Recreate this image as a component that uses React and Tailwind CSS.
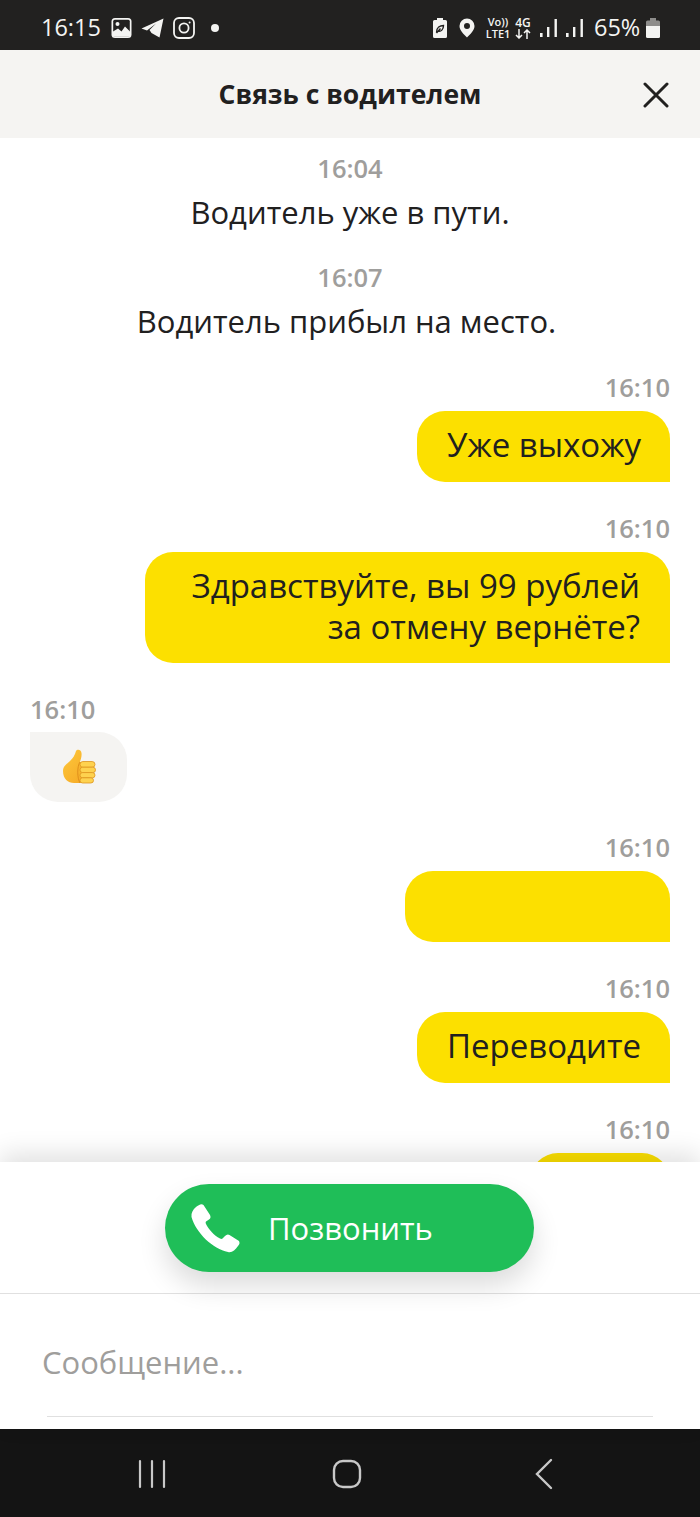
import React from "react";

const SANS = "font-['Open_Sans','Noto_Sans',sans-serif]";

/* -----------------------status bar icons---------------------------- */
const PhotoIcon = () => (
  <svg width="22" height="22" viewBox="0 0 22 22">
    <rect x="0.5" y="1" width="20" height="20" rx="3.5" fill="#f4f4f2" />
    <rect x="2.2" y="2.8" width="16.6" height="16.4" rx="1.5" fill="#222120" />
    <path d="M2 19.5V14.5L7 11.5L10.5 14.5L14 9.5L19 14.5V19.5Z" fill="#f4f4f2" />
    <circle cx="6.5" cy="7" r="2" fill="#f4f4f2" />
  </svg>
);

const TelegramIcon = () => (
  <svg width="24" height="22" viewBox="0 0 24 22">
    <path d="M0.5 11.5L22.5 1.5L18.5 20.5L10.5 16L8.5 13L15 6.5L6 13.5Z" fill="#f4f4f2" />
  </svg>
);

const InstagramIcon = () => (
  <svg width="22" height="22" viewBox="0 0 22 22" fill="none" stroke="#f4f4f2" strokeWidth="1.8">
    <rect x="1" y="1" width="20" height="20" rx="5" />
    <circle cx="11" cy="11" r="4.6" />
    <circle cx="16.6" cy="5.4" r="1" fill="#f4f4f2" stroke="none" />
  </svg>
);

const EcoBatteryIcon = () => (
  <svg width="16" height="22" viewBox="0 0 16 22">
    <path d="M5 1H11V3H13.5Q15 3 15 4.5V19.5Q15 21 13.5 21H2.5Q1 21 1 19.5V4.5Q1 3 2.5 3H5Z" fill="#f4f4f2" />
    <path d="M4.5 15.5C4.5 10.5 8 8.5 11.5 8.5C11.5 12.5 9 15 6 14M4.5 16L8.5 11.5" fill="none" stroke="#222120" strokeWidth="1.4" />
  </svg>
);

const PinIcon = () => (
  <svg width="16" height="20" viewBox="0 0 16 20">
    <path fillRule="evenodd" d="M8 0.5A7.5 7.5 0 0 1 15.5 8C15.5 12.5 11 16.5 8 19.5C5 16.5 0.5 12.5 0.5 8A7.5 7.5 0 0 1 8 0.5ZM8 5A3 3 0 1 0 8 11A3 3 0 0 0 8 5Z" fill="#f4f4f2" />
  </svg>
);

const ArrowsIcon = () => (
  <svg width="16" height="10" viewBox="0 0 16 10" fill="none" stroke="#f4f4f2" strokeWidth="1.5">
    <path d="M4 0V9M1 6L4 9L7 6M12 10V1M9 4L12 1L15 4" />
  </svg>
);

const SignalIcon = () => (
  <svg width="18" height="20" viewBox="0 0 18 20" fill="#f4f4f2">
    <rect x="0" y="15" width="2.6" height="4" />
    <rect x="7" y="9" width="2.4" height="10" />
    <rect x="14.5" y="1" width="2.4" height="18" />
  </svg>
);

const BatteryIcon = () => (
  <svg width="16" height="22" viewBox="0 0 16 22">
    <path d="M5 1H11V3.5H13.5Q15 3.5 15 5V9H1V5Q1 3.5 2.5 3.500H5Z" fill="#8e8d8b" />
    <path d="M1 9H15V19.5Q15 21 13.5 21H2.5Q1 21 1 19.5Z" fill="#f4f4f2" />
  </svg>
);

/* -----------------------thumb emoji---------------------------- */
const ThumbIcon = () => (
  <svg width="34" height="36" viewBox="0 0 34 36">
    <defs>
      <linearGradient id="thumbFill" x1="0" y1="0" x2="1" y2="1">
        <stop offset="0" stopColor="#fdc83c" />
        <stop offset="1" stopColor="#f5a623" />
      </linearGradient>
    </defs>
    <path d="M1 22C1 17 5 15 8 12C11 9 13 6 14 2C15 0 19 0 19.500 4C20 8 18.500 11 18 13H26C28 13 29 34 26 34H12C6 34 1 30 1 22Z" fill="url(#thumbFill)" />
    <path d="M18 13C15 17 15 29 18 34" fill="none" stroke="#e08f1a" strokeWidth="1" />
    <rect x="18" y="12.500" width="15" height="5.800" rx="2.900" fill="#fed24f" stroke="#dd9420" strokeWidth="0.800" />
    <rect x="18" y="18.200" width="15.500" height="5.400" rx="2.700" fill="#fed24f" stroke="#dd9420" strokeWidth="0.800" />
    <rect x="18" y="23.600" width="15" height="5.200" rx="2.600" fill="#fed24f" stroke="#dd9420" strokeWidth="0.800" />
    <rect x="18" y="28.800" width="13.500" height="5.200" rx="2.600" fill="#fed24f" stroke="#dd9420" strokeWidth="0.800" />
  </svg>
);

const PhoneIcon = () => (
  <svg width="50" height="50" viewBox="0 0 50 50">
    <path d="M6 4C8.500 2 11.500 0 13.500 2L20 12C21 14 20.500 15.500 19 16.500L16 18.500C15.500 19 15.500 20 16 21C18.500 26 24 32.500 30 35.500C31 36 32 36 32.500 35.500L35 33C36.500 31.500 38 31 39.500 32L49 38C50 40 49.500 41.500 48 43C45 47 42 50 38 49C23 46 6 30 1.500 14C1 10 3 6.500 6 4Z" fill="#fff" />
  </svg>
);

/* -----------------------chat pieces---------------------------- */
const Time = ({ children, align = "text-right" }) => (
  <div className={`h-[30px] text-[25.5px] leading-[28px] font-semibold text-[#9f9e9c] ${align}`}>
    {children}
  </div>
);

const SystemMessage = ({ time, text, className, textClass = "" }) => (
  <div className={className}>
    <Time align="text-center">{time}</Time>
    <p className={`mt-2 pb-px text-center text-[31px] leading-[40px] text-[#21201f] ${textClass}`}>{text}</p>
  </div>
);

const MyMessage = ({ children, width, className = "mt-[31px]" }) => (
  <div className={`flex flex-col items-end ${className}`}>
    <Time>16:10</Time>
    <div className={`mt-2 min-h-[71px] rounded-[28px] rounded-br-none bg-[#fce000] pt-[14px] pr-[30px] pb-[16px] pl-[30px] text-right text-[33px] leading-[40.500px] whitespace-nowrap text-[#21201f] ${width}`}>
      {children}
    </div>
  </div>
);

const App = () => {
  return (
    <div className={`flex h-[1517px] w-[700px] flex-col overflow-hidden bg-white ${SANS}`}>
      {/* -------------------------STATUS BAR-------------- */}
      <div className="flex h-[50px] shrink-0 items-center justify-between bg-[#222120] pt-[5px] pr-[39px] pl-[41px] text-[#f4f4f2]">
        <div className="flex items-center">
          <span className="w-[70px] text-[23.500px] leading-none">16:15</span>
          <div className="flex items-center gap-[8px]">
            <PhotoIcon />
            <TelegramIcon />
            <InstagramIcon />
          </div>
          <span className="ml-[16px] h-2 w-2 rounded-full bg-[#f4f4f2]" />
        </div>
        <div className="flex items-center">
          <EcoBatteryIcon />
          <div className="ml-[11px]"><PinIcon /></div>
          <div className="ml-[10px] flex w-[26px] flex-col items-center text-[11px] leading-[12px] font-semibold">
            <span>Vo))</span>
            <span>LTE1</span>
          </div>
          <div className="ml-[3px] flex w-[18px] flex-col items-center text-[12px] leading-[12px] font-semibold">
            <span>4G</span>
            <ArrowsIcon />
          </div>
          <div className="ml-[8px]"><SignalIcon /></div>
          <div className="ml-[8px]"><SignalIcon /></div>
          <span className="ml-[10px] w-[48px] text-[23.500px] leading-none whitespace-nowrap">65%</span>
          <div className="ml-[3px]"><BatteryIcon /></div>
        </div>
      </div>

      {/* -------------------------HEADER-------------- */}
      <div className="relative flex h-[88px] shrink-0 items-center justify-center bg-[#f5f4f2] pt-[2px]">
        <h1 className="text-[26.500px] font-bold text-[#21201f]">Связь с водителем</h1>
        <svg className="absolute top-[32px] right-[31px]" width="26" height="26" viewBox="0 0 26 26" fill="none" stroke="#21201f" strokeWidth="3" strokeLinecap="round">
          <path d="M2 2L24 24M24 2L2 24" />
        </svg>
      </div>

      {/* -------------------------CHAT-------------- */}
      <div className="min-h-0 flex-1 overflow-hidden px-[30px] pt-4">
        <SystemMessage time="16:04" text="Водитель уже в пути." />
        <SystemMessage time="16:07" text="Водитель прибыл на место." className="mt-[30px]" textClass="pr-[7px] text-[30.800px]" />

        <MyMessage width="w-[253px]">Уже выхожу</MyMessage>
        <MyMessage width="w-[525px]" className="mt-[32px]">
          Здравствуйте, вы 99 рублей
          <br />
          за отмену вернёте?
        </MyMessage>

        <div className="mt-[32px]">
          <Time align="text-left">16:10</Time>
          <div className="mt-[7px] flex h-[70px] w-[97px] items-center justify-center rounded-[28px] rounded-tl-none bg-[#f5f4f2]">
            <ThumbIcon />
          </div>
        </div>

        <MyMessage width="w-[265px]" />
        <MyMessage width="w-[253px]" className="mt-[32px]">Переводите</MyMessage>
        <MyMessage width="w-[140px]" className="mt-[32px]" />
      </div>

      {/* -------------------------CALL + INPUT-------------- */}
      <div className="relative h-[267px] shrink-0 bg-white shadow-[0_-8px_24px_rgba(0,0,0,0.12)]">
        <div className="flex h-[132px] items-start justify-center border-b border-[#e0e0e0] pt-[22px] pr-px">
          <button className="flex h-[88px] w-[369px] items-center rounded-full bg-[#1fbe58] pl-[25px] shadow-[0_14px_28px_rgba(0,0,0,0.14)]">
            <PhoneIcon />
            <span className="ml-[28px] text-[31px] text-white">Позвонить</span>
          </button>
        </div>
        <div className="mx-[47px] flex h-[123px] items-center border-b border-[#e0e0e0] pt-[14px]">
          <span className="ml-[-5px] text-[31px] text-[#9f9e9c]">Сообщение...</span>
        </div>
      </div>

      {/* -------------------------NAV BAR-------------- */}
      <div className="flex h-[88px] shrink-0 items-center bg-[#141414] pt-[2px] pl-[138px]">
        <svg width="28" height="30" viewBox="0 0 28 30" fill="none" stroke="#c8c8c8" strokeWidth="2.200" strokeLinecap="round">
          <path d="M2 2V28M14 2V28M26 2V28" />
        </svg>
        <svg className="ml-[166px]" width="30" height="30" viewBox="0 0 30 30" fill="none" stroke="#c8c8c8" strokeWidth="2.400">
          <rect x="2" y="2" width="26" height="26" rx="9" />
        </svg>
        <svg className="ml-[172px]" width="20" height="32" viewBox="0 0 20 32" fill="none" stroke="#c8c8c8" strokeWidth="2.400" strokeLinecap="round">
          <path d="M17 2L3 16L17 30" />
        </svg>
      </div>
    </div>
  );
};

export default App;
